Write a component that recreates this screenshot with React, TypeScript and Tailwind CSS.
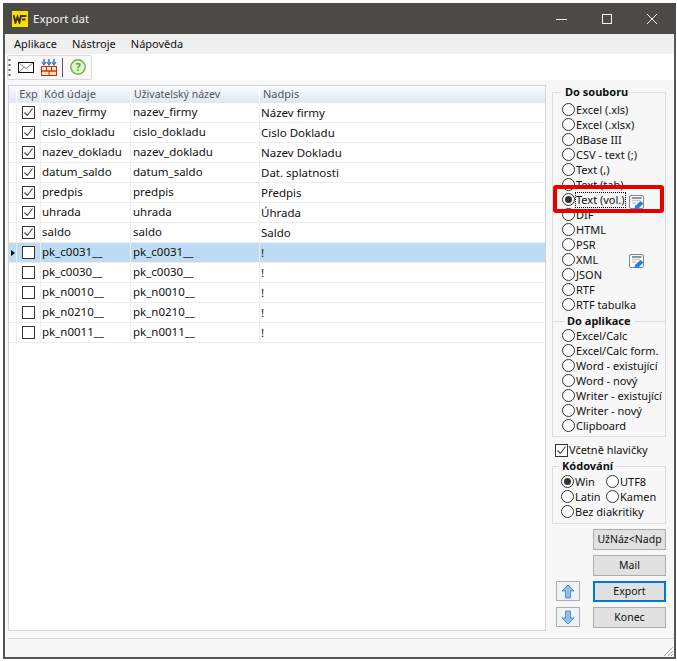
const FONT = "[font-family:'Noto_Sans','Open_Sans',sans-serif]";

const ROWS = [
  { checked: true, code: 'nazev_firmy', name: 'nazev_firmy', title: 'Název firmy' },
  { checked: true, code: 'cislo_dokladu', name: 'cislo_dokladu', title: 'Cislo Dokladu' },
  { checked: true, code: 'nazev_dokladu', name: 'nazev_dokladu', title: 'Nazev Dokladu' },
  { checked: true, code: 'datum_saldo', name: 'datum_saldo', title: 'Dat. splatnosti' },
  { checked: true, code: 'predpis', name: 'predpis', title: 'Předpis' },
  { checked: true, code: 'uhrada', name: 'uhrada', title: 'Úhrada' },
  { checked: true, code: 'saldo', name: 'saldo', title: 'Saldo' },
  { checked: false, code: 'pk_c0031__', name: 'pk_c0031__', title: '!', active: true },
  { checked: false, code: 'pk_c0030__', name: 'pk_c0030__', title: '!' },
  { checked: false, code: 'pk_n0010__', name: 'pk_n0010__', title: '!' },
  { checked: false, code: 'pk_n0210__', name: 'pk_n0210__', title: '!' },
  { checked: false, code: 'pk_n0011__', name: 'pk_n0011__', title: '!' },
];

const FILE_OPTIONS = [
  'Excel (.xls)', 'Excel (.xlsx)', 'dBase III', 'CSV - text (;)', 'Text (,)', 'Text (tab)', 'Text (vol.)',
  'DIF', 'HTML', 'PSR', 'XML', 'JSON', 'RTF', 'RTF tabulka',
];

const APP_OPTIONS = [
  'Excel/Calc', 'Excel/Calc form.', 'Word - existující', 'Word - nový', 'Writer - existující', 'Writer - nový', 'Clipboard',
];

function Radio({ label, checked, focused }: { label: string; checked?: boolean; focused?: boolean }) {
  return (
    <div className="flex h-[15px] items-center">
      <span className="flex h-[13px] w-[13px] shrink-0 items-center justify-center rounded-full border border-[#333] bg-white">
        {checked && <span className="h-[7px] w-[7px] rounded-full bg-[#333]" />}
      </span>
      <span className={`ml-px whitespace-nowrap leading-[14px] ${focused ? 'outline-1 outline-dotted outline-black' : ''}`}>{label}</span>
    </div>
  );
}

function Check({ checked }: { checked: boolean }) {
  return (
    <span className="flex h-[13px] w-[13px] shrink-0 items-center justify-center border border-[#333] bg-white">
      {checked && (
        <svg width="11" height="11" viewBox="0 0 11 11" fill="none" stroke="#444" strokeWidth="1.1">
          <path d="M1.5 5.5 L4.3 8.5 L9.5 1.5" />
        </svg>
      )}
    </span>
  );
}

function EditIcon() {
  return (
    <svg width="16" height="15" viewBox="0 0 16 15" fill="none">
      <rect x="0.5" y="0.5" width="14" height="13" rx="1.5" fill="#fafafa" stroke="#7d8a96" />
      <path d="M3 3 H12.5" stroke="#5f6b76" strokeWidth="1.4" />
      <path d="M3 5.5 H11" stroke="#c3c9cf" strokeWidth="1.4" />
      <path d="M3 8 H7" stroke="#c3c9cf" strokeWidth="1.4" />
      <path d="M5.5 14 L6 11 L11.5 6 L14.5 8.5 L9 14 Z" fill="#2b7fdc" />
    </svg>
  );
}

function ArrowButton({ up }: { up?: boolean }) {
  return (
    <div className="flex h-5 w-6 items-center justify-center border border-[#adadad] bg-[#eef3f8]">
      <svg width="14" height="15" viewBox="0 0 14 15" className={up ? '' : 'rotate-180'}>
        <path d="M7 1 L13 7 H9.5 V14 H4.5 V7 H1 Z" fill="#8fc0ee" stroke="#4a90d6" />
      </svg>
    </div>
  );
}

function ActionButton({ label, primary }: { label: string; primary?: boolean }) {
  return (
    <div
      className={`flex h-[21px] w-[73px] items-center justify-center whitespace-nowrap bg-[#e1e1e1] text-[10.5px] leading-none ${
        primary ? 'border-2 border-[#0078d7]' : 'border border-[#adadad]'
      }`}
    >
      {label}
    </div>
  );
}

export default function App() {
  return (
    <div className={`h-[661px] w-[677px] bg-white pb-[2px] pl-[3px] pr-[1px] pt-[3px] text-[11.5px] text-[#111] ${FONT}`}>
      <div className="relative flex h-full flex-col border-x-2 border-b-2 border-[#565656] bg-[#f7f7f7]">
        {/* Title bar */}
        <div className="-mx-[2px] flex h-[31px] shrink-0 items-center bg-[#4b4a47] pl-[9px] text-[#f2f2f2]">
          <span className="flex h-4 w-4 items-center justify-center bg-[#ffdf00]">
            <svg width="14" height="10" viewBox="0 0 14 10" fill="none" stroke="#3a3328" strokeWidth="2">
              <path d="M0.5 1 L2.5 8.5 L4.5 3 L6.5 8.5 L8 1 M8.5 2 H13.5 M9 5.5 H12.5" />
            </svg>
          </span>
          <span className="ml-[5px] text-[11.5px]">Export dat</span>
          <div className="ml-auto flex items-center">
            <svg width="46" height="16" viewBox="0 0 46 16" stroke="#f2f2f2" fill="none"><path d="M18 8.5 H29" /></svg>
            <svg width="46" height="16" viewBox="0 0 46 16" stroke="#f2f2f2" fill="none"><rect x="18.5" y="3.5" width="9" height="9" /></svg>
            <svg width="46" height="16" viewBox="0 0 46 16" stroke="#f2f2f2" fill="none"><path d="M17 3 L27 13 M27 3 L17 13" /></svg>
          </div>
        </div>

        {/* Menu */}
        <div className="flex h-5 shrink-0 items-center gap-[15px] bg-[#f0f0f0] pl-[9px] text-[11px]">
          <span>Aplikace</span>
          <span>Nástroje</span>
          <span>Nápověda</span>
        </div>

        {/* Toolbar */}
        <div className="flex h-[26px] shrink-0 items-center bg-white pl-[2px]">
          <div className="flex h-[25px] items-center rounded-[2px] border border-[#d9d9d9] bg-[#f9f9f9] pr-[5px]">
            <svg width="3" height="19" viewBox="0 0 3 19" fill="#666">
              <rect x="0.5" y="1" width="2" height="2" />
              <rect x="0.5" y="6" width="2" height="2" />
              <rect x="0.5" y="11" width="2" height="2" />
              <rect x="0.5" y="16" width="2" height="2" />
            </svg>
            <svg width="16" height="13" viewBox="0 0 16 13" fill="#fff" stroke="#111" className="ml-[7px]">
              <rect x="0.5" y="1.5" width="15" height="10" />
              <path d="M1 2 L8 7.5 L15 2 M1 11 L6 6.5" stroke="#888" fill="none" />
            </svg>
            <svg width="16" height="17" viewBox="0 0 16 17" className="ml-[7px]">
              <path d="M3 0 V5 M8 0 V5 M13 0 V5" stroke="#2f6fc4" strokeWidth="1.4" fill="none" />
              <path d="M1 3 L3 6 L5 3 M6 3 L8 6 L10 3 M11 3 L13 6 L15 3" stroke="#2f6fc4" strokeWidth="1.2" fill="none" />
              <rect x="0.5" y="7.5" width="15" height="9" fill="#fdeeb0" stroke="#d8231a" />
              <path d="M0.5 12 H15.5" stroke="#d8231a" strokeWidth="1.4" />
              <path d="M5.5 8 V12 M10.5 8 V12 M8 12 V16" stroke="#d8231a" />
            </svg>
            <span className="ml-[5px] h-[19px] w-px bg-[#555]" />
            <svg width="16" height="16" viewBox="0 0 16 16" className="ml-[7px]">
              <circle cx="8" cy="8" r="7.2" fill="#e2f3d2" stroke="#6cb33f" strokeWidth="1.4" />
              <text x="8" y="12" textAnchor="middle" fontSize="11" fontWeight="700" fill="#5aa02c">?</text>
            </svg>
          </div>
        </div>

        {/* Body */}
        <div className="flex min-h-0 flex-1 bg-[#f7f7f7] pl-[3px] pt-[5px]">
          {/* Grid */}
          <div className="h-[546px] w-[538px] shrink-0 border border-[#d4d4d4] bg-white">
            <div className="flex h-[17px] items-center bg-gradient-to-b from-[#fafbfd] to-[#dfe7f1] text-[11px] text-[#555]">
              <span className="h-full w-2 border-r border-white" />
              <span className="flex h-full w-6 items-center justify-center border-r border-white">Exp</span>
              <span className="flex h-full w-[90px] items-center border-r border-white pl-[3px]">Kód údaje</span>
              <span className="flex h-full w-[129px] items-center border-r border-white pl-[3px] text-[10.5px]">Uživatelský název</span>
              <span className="flex h-full flex-1 items-center pl-[3px]">Nadpis</span>
            </div>
            {ROWS.map((row) => (
              <div key={row.code} className={`flex h-5 items-center border-b border-[#ededed] ${row.active ? 'bg-[#bddcf3]' : ''}`}>
                <span className="relative flex h-full w-2 items-center justify-center border-r border-[#ededed]">
                  {row.active && <span className="border-y-[3px] border-l-[4px] border-y-transparent border-l-black" />}
                </span>
                <span className="flex h-full w-6 items-center justify-center border-r border-[#ededed]">
                  <Check checked={row.checked} />
                </span>
                <span className="flex h-full w-[90px] items-center whitespace-nowrap border-r border-[#ededed] pb-[2px] pl-[1px]">{row.code}</span>
                <span className="flex h-full w-[129px] items-center border-r border-[#ededed] pb-[2px] pl-[2px]">{row.name}</span>
                <span className="flex h-full flex-1 items-center pl-[1px]">{row.title}</span>
              </div>
            ))}
          </div>

          {/* Right side */}
          <div className="ml-[6px] flex w-[114px] flex-col text-[11px]">
            <div className="relative mt-[7px] border border-[#dcdcdc] pb-[9px] pl-[9px] pt-[9px]">
              <span className="absolute -top-[8px] left-[8px] bg-[#f7f7f7] px-[4px] font-bold leading-[14px]">Do souboru</span>
              {FILE_OPTIONS.map((label) => (
                <Radio key={label} label={label} checked={label === 'Text (vol.)'} focused={label === 'Text (vol.)'} />
              ))}
              <span className="absolute left-[76px] top-[102px]"><EditIcon /></span>
              <span className="absolute left-[76px] top-[161px]"><EditIcon /></span>
            </div>
            <div className="relative -mt-px border border-[#dcdcdc] pb-[3px] pl-[9px] pt-[6px]">
              <span className="absolute -top-[8px] left-[11px] bg-[#f7f7f7] px-[3px] font-bold leading-[14px]">Do aplikace</span>
              {APP_OPTIONS.map((label) => (
                <Radio key={label} label={label} />
              ))}
            </div>
            <div className="mt-[6px] flex h-[15px] items-center pl-[3px]">
              <Check checked />
              <span className="ml-px">Včetně hlavičky</span>
            </div>
            <div className="relative mt-[8px] h-[58px] border border-[#dcdcdc] pl-[8px] pt-[7px]">
              <span className="absolute -top-[8px] left-[6px] bg-[#f7f7f7] px-[3px] font-bold leading-[14px]">Kódování</span>
              <div className="grid grid-cols-[45px_1fr]">
                <Radio label="Win" checked />
                <Radio label="UTF8" />
                <Radio label="Latin" />
                <Radio label="Kamen" />
                <div className="col-span-2"><Radio label="Bez diakritiky" /></div>
              </div>
            </div>
            <div className="mt-[5px] grid grid-cols-[24px_73px] justify-between gap-y-[5px] pl-[4px]">
              <span />
              <ActionButton label="UžNáz<Nadp" />
              <span />
              <ActionButton label="Mail" />
              <ArrowButton up />
              <ActionButton label="Export" primary />
              <ArrowButton />
              <ActionButton label="Konec" />
            </div>
          </div>
        </div>

        {/* Status bar */}
        <div className="mb-[18px] ml-[3px] h-px shrink-0 bg-[#d8d8d8]" />

        {/* Resize grip */}
        <svg width="12" height="12" viewBox="0 0 12 12" stroke="#aaa" className="absolute bottom-0 right-0">
          <path d="M11 2 L2 11 M11 6 L6 11 M11 9 L9 11" />
        </svg>

        {/* Highlight marker */}
        <div className="absolute left-[548px] top-[182px] h-[28px] w-[111px] rounded-[3px] border-[4px] border-[#e60000]" />
      </div>
    </div>
  );
}
